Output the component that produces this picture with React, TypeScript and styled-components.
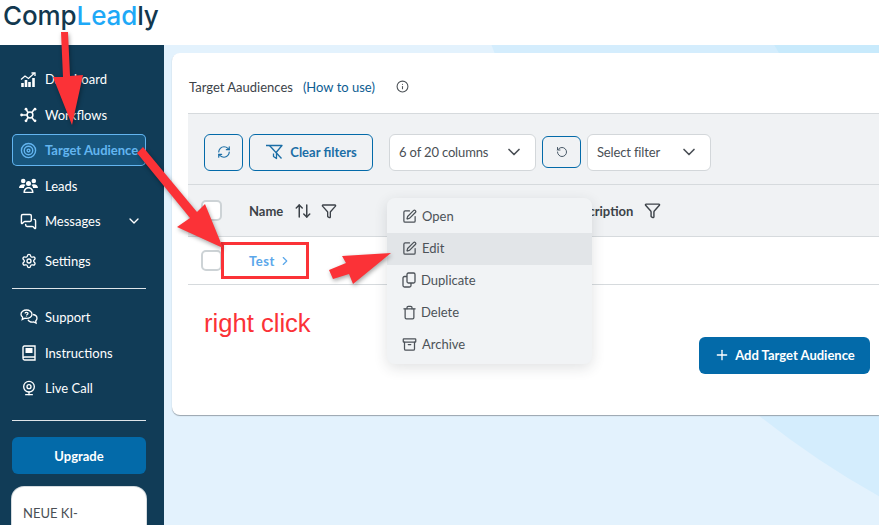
import styled, { createGlobalStyle } from 'styled-components';
import {
  Archive,
  ArrowUpDown,
  ChevronDown,
  ChevronRight,
  Funnel,
  Info,
  MessagesSquare,
  Plus,
  RefreshCw,
  RotateCcw,
  Settings,
  SquarePen,
  Target,
  Trash,
  Webcam,
} from 'lucide-react';

const GlobalStyle = createGlobalStyle`
  html, body { margin: 0; padding: 0; background: #fff; }
  * { box-sizing: border-box; }
  body { font-family: Lato, "Liberation Sans", sans-serif; }
`;

const DashboardIcon = () => (
  <svg width="17" height="15" viewBox="0 0 17 15" fill="none" stroke="currentColor" strokeWidth="1.3">
    <path d="M1 7.500 5 4l3.500 2.500L14.500 1" />
    <path d="M11.500 1H15v3" />
    <path d="M2.500 15v-4M6 15V8M9.500 15v-5M13.500 15V6" strokeWidth="2.600" />
  </svg>
);

const WorkflowIcon = () => (
  <svg width="18" height="16" viewBox="0 0 18 16" fill="none" stroke="currentColor" strokeWidth="1.500">
    <circle cx="10" cy="8" r="2.900" />
    <path d="M1 8h6M8 5.500 6.500 3M12 5.500 14 2.500M8 10.500 6.500 13M12 10.500l2 3" />
    <circle cx="1.600" cy="8" r="1.400" fill="currentColor" stroke="none" />
    <circle cx="6" cy="2.200" r="1.400" fill="currentColor" stroke="none" />
    <circle cx="15" cy="2.200" r="1.400" fill="currentColor" stroke="none" />
    <circle cx="6" cy="13.800" r="1.400" fill="currentColor" stroke="none" />
    <circle cx="15" cy="13.800" r="1.400" fill="currentColor" stroke="none" />
  </svg>
);

const LeadsIcon = () => (
  <svg width="19" height="15" viewBox="0 0 19 15" fill="currentColor">
    <circle cx="4.200" cy="3" r="2.300" />
    <circle cx="14.800" cy="3" r="2.300" />
    <circle cx="9.500" cy="5.500" r="2.500" />
    <path d="M0 10c0-2.500 1.700-3.800 4.200-3.800 1 0 1.800.2 2.400.6C5.600 7.600 5 8.700 5 10H0ZM19 10c0-2.500-1.700-3.800-4.200-3.800-1 0-1.800.2-2.400.6 1 .8 1.600 1.900 1.600 3.200h5Z" />
    <path d="M4.500 15c-.3-3.600 2-6 5-6s5.300 2.400 5 6h-10Zm1.500-1.200h7c-.3-2-1.500-3.400-3.500-3.400S6.300 11.800 6 13.800Z" fillRule="evenodd" />
  </svg>
);

const SupportIcon = () => (
  <svg width="18" height="16" viewBox="0 0 18 16" fill="none" stroke="currentColor" strokeWidth="1.300">
    <path d="M6.500 1C3.400 1 1 2.900 1 5.200c0 1.200.7 2.300 1.700 3L2.200 10.500l2.700-1.300c.5.1 1 .2 1.600.2 3 0 5.500-1.900 5.500-4.200S9.500 1 6.500 1Z" />
    <path d="M13 5.500c2.200.4 4 1.900 4 3.800 0 1-.5 1.900-1.300 2.600l.4 2.300-2.400-1.200c-2.400.4-4.800-.4-5.700-2.300" />
    <path d="M5 4.300c.3-1.300 3-1.300 3 .2 0 1-1.500 1-1.500 2M6.500 7.500v.5" />
  </svg>
);

const InstructionsIcon = () => (
  <svg width="14" height="16" viewBox="0 0 14 16" fill="none" stroke="currentColor" strokeWidth="1.400">
    <path d="M1 13V2.300C1 1.600 1.600 1 2.300 1H13v11H2.500C1.700 12 1 12.500 1 13.300 1 14.200 1.700 15 2.500 15H13v-3" />
    <rect x="3.500" y="3" width="7" height="5" fill="currentColor" stroke="none" />
  </svg>
);

const ClearFilterIcon = () => (
  <svg width="20" height="16" viewBox="0 0 20 16" fill="none" stroke="currentColor" strokeWidth="1.300" strokeLinejoin="round">
    <path d="M1 1.500h16L11.500 8v6.500l-3-2V9.500" />
    <path d="M4.500 1.500 16.500 14.500" />
  </svg>
);

const DuplicateIcon = () => (
  <svg width="15" height="16" viewBox="0 0 15 16" fill="none" stroke="currentColor" strokeWidth="1.300" strokeLinejoin="round">
    <path d="M5 2.500c0-.8.6-1.500 1.400-1.500h5.200c.8 0 1.400.7 1.400 1.500v7c0 .8-.6 1.500-1.400 1.500H6.400C5.600 11 5 10.300 5 9.500v-7Z" />
    <path d="M5 4.500H2.500C1.700 4.500 1 5.200 1 6v7.500c0 .8.700 1.500 1.500 1.500h5c.8 0 1.500-.7 1.500-1.500V11" />
  </svg>
);

const Page = styled.div`
  position: relative;
  width: 879px;
  height: 525px;
  overflow: hidden;
  display: flex;
  flex-direction: column;
  background: #fff;
`;

const Header = styled.header`
  height: 45px;
  flex: none;
  padding-left: 3px;
  background: #fff;
`;

const Logo = styled.div`
  font-family: Inter, sans-serif;
  font-size: 26px;
  line-height: 32px;
  font-weight: 500;
  letter-spacing: -0.1px;
  color: #12384f;
`;

const LogoAccent = styled.span`
  color: #1ea9f7;
`;

const Body = styled.div`
  flex: 1;
  display: flex;
  min-height: 0;
`;

const Sidebar = styled.aside`
  width: 164px;
  flex: none;
  padding: 18px 18px 0 12px;
  background: #113c57;
  display: flex;
  flex-direction: column;
  overflow: hidden;
`;

const NavGroup = styled.nav`
  display: flex;
  flex-direction: column;
  gap: 3.5px;
`;

const NavItem = styled.div<{ $active?: boolean; $spaced?: boolean }>`
  height: 32px;
  flex: none;
  display: flex;
  align-items: center;
  gap: 7px;
  padding-left: 7px;
  margin-top: ${(p) => (p.$spaced ? '4.5px' : '0')};
  border-radius: 5px;
  font-size: 13px;
  color: ${(p) => (p.$active ? '#63b5f0' : '#fff')};
  background: ${(p) => (p.$active ? '#17557c' : 'transparent')};
  box-shadow: ${(p) => (p.$active ? 'inset 0 0 0 1px #63b5f0' : 'none')};
  font-weight: ${(p) => (p.$active ? 700 : 400)};
`;

const NavIcon = styled.span`
  width: 19px;
  height: 18px;
  display: flex;
  align-items: center;
  justify-content: center;
  flex: none;
`;

const NavCaret = styled.span`
  margin-left: auto;
  margin-right: 4px;
  display: flex;
`;

const Divider = styled.hr<{ $before: number; $after: number }>`
  width: 100%;
  height: 1px;
  flex: none;
  margin: ${(p) => p.$before}px 0 ${(p) => p.$after}px;
  border: 0;
  background: #dfe5e9;
`;

const UpgradeButton = styled.div`
  height: 37px;
  flex: none;
  display: flex;
  align-items: center;
  justify-content: center;
  border-radius: 6px;
  background: #036aa9;
  color: #fff;
  font-size: 13px;
  font-weight: 700;
`;

const PromoCard = styled.div`
  margin-top: 13px;
  height: 120px;
  flex: none;
  padding: 18px 11px;
  border-radius: 12px;
  background: #fff;
  box-shadow: 0 0 0 1px #d5dbdf;
  color: #4a4f55;
  font-size: 13px;
  line-height: 17px;
`;

const Main = styled.main`
  position: relative;
  flex: 1;
  min-width: 0;
  padding: 8px 0 0 8px;
  background: #e3f2fd;
  overflow: hidden;
`;

const BackdropCircle = styled.div<{ $radius: number; $tone: string }>`
  position: absolute;
  left: ${(p) => 1131 - p.$radius}px;
  top: ${(p) => -298 - p.$radius}px;
  width: ${(p) => p.$radius * 2}px;
  height: ${(p) => p.$radius * 2}px;
  border-radius: 50%;
  background: ${(p) => p.$tone};
`;

const Card = styled.section`
  position: relative;
  height: 362px;
  border-radius: 8px 0 0 8px;
  background: #fff;
  box-shadow: 0 1px 1px #98a4ad;
  display: flex;
  flex-direction: column;
`;

const TitleRow = styled.div`
  height: 60px;
  flex: none;
  display: flex;
  align-items: center;
  padding: 7px 0 0 17px;
  font-size: 13px;
  color: #3d4349;
`;

const HowTo = styled.span`
  margin-left: 10px;
  color: #0d5d92;
`;

const InfoIcon = styled.span`
  margin-left: 21px;
  display: flex;
  color: #4d5358;
`;

const TableArea = styled.div`
  margin-left: 16px;
  display: flex;
  flex-direction: column;
`;

const Toolbar = styled.div`
  height: 72px;
  display: flex;
  align-items: center;
  padding: 6px 0 0 16px;
  background: #f0f2f4;
  border-top: 1px solid #d6dadd;
  border-bottom: 1px solid #d6dadd;
`;

const OutlineButton = styled.div<{ $width: number; $height?: number; $gapAfter?: number }>`
  width: ${(p) => p.$width}px;
  height: ${(p) => p.$height ?? 37}px;
  margin-right: ${(p) => p.$gapAfter ?? 6}px;
  flex: none;
  display: flex;
  align-items: center;
  justify-content: center;
  gap: 5px;
  border: 1px solid #036aa9;
  border-radius: 6px;
  color: #1b6ea6;
  font-size: 13px;
  font-weight: 700;
`;

const SelectBox = styled.div<{ $width: number; $gapAfter?: number }>`
  width: ${(p) => p.$width}px;
  height: 37px;
  margin-right: ${(p) => p.$gapAfter ?? 6}px;
  flex: none;
  display: flex;
  align-items: center;
  justify-content: space-between;
  padding: 0 11px 0 9px;
  border: 1px solid #d3d7da;
  border-radius: 6px;
  background: #fff;
  color: #4a4f55;
  font-size: 13px;
  letter-spacing: -0.15px;
`;

const HeaderRow = styled.div`
  height: 52px;
  display: flex;
  align-items: center;
  padding-left: 13px;
  background: #f0f2f4;
  border-bottom: 1px solid #d6dadd;
  color: #3c4248;
  font-size: 13px;
  font-weight: 700;
`;

const Checkbox = styled.span`
  width: 21px;
  height: 21px;
  flex: none;
  border: 2px solid #cdd3d6;
  border-radius: 5px;
  background: #fff;
`;

const NameColumn = styled.div`
  margin-left: 27px;
  width: 317px;
  display: flex;
  align-items: center;
`;

const ColumnIcons = styled.div`
  margin-left: 11px;
  display: flex;
  align-items: center;
  gap: 9px;
  color: #3c4248;
`;

const DescriptionColumn = styled.div`
  display: flex;
  align-items: center;
  gap: 11px;
  color: #3c4248;
`;

const DataRow = styled.div`
  height: 48px;
  display: flex;
  align-items: center;
  padding-left: 13px;
  background: #fff;
  border-bottom: 1px solid #d6dadd;
`;

const RowLink = styled.div`
  margin-left: 27px;
  display: flex;
  align-items: center;
  gap: 3px;
  color: #5ba7ea;
  font-size: 13px;
  font-weight: 700;
  letter-spacing: 0.5px;
`;

const CardFooter = styled.div`
  flex: 1;
  display: flex;
  justify-content: flex-end;
  align-items: flex-start;
  padding: 52px 9px 0 0;
`;

const AddButton = styled.div`
  width: 171px;
  height: 37px;
  padding-bottom: 2px;
  display: flex;
  align-items: center;
  justify-content: center;
  gap: 5px;
  border-radius: 6px;
  background: #036aa9;
  color: #fff;
  font-size: 13px;
  font-weight: 700;
`;

const ContextMenu = styled.div`
  position: absolute;
  left: 387px;
  top: 198px;
  width: 205px;
  height: 166px;
  padding-top: 3px;
  border-radius: 8px;
  background: #f1f3f5;
  box-shadow: 0 4px 14px rgba(40, 50, 60, 0.14);
  display: flex;
  flex-direction: column;
`;

const MenuItem = styled.div<{ $hover?: boolean; $gap: number }>`
  height: 32px;
  flex: none;
  display: flex;
  align-items: center;
  gap: ${(p) => p.$gap}px;
  padding: 0 0 2px 15px;
  background: ${(p) => (p.$hover ? '#e2e5e8' : 'transparent')};
  color: #4c5258;
  font-size: 13px;
`;

const Annotations = styled.svg`
  position: absolute;
  inset: 0;
  pointer-events: none;
  filter: drop-shadow(1.5px 2px 2px rgba(0, 0, 0, 0.35));
`;

const RedFrame = styled.div`
  position: absolute;
  left: 221px;
  top: 242px;
  width: 88px;
  height: 37px;
  border: 3px solid #fb3237;
`;

const RedNote = styled.div`
  position: absolute;
  left: 204px;
  top: 308px;
  font-family: "Liberation Sans", Arial, sans-serif;
  font-size: 25.6px;
  line-height: 30px;
  color: #fb3237;
`;

const App = () => (
  <Page>
    <GlobalStyle />
    <Header>
      <Logo>
        Comp<LogoAccent>Lead</LogoAccent>ly
      </Logo>
    </Header>
    <Body>
      <Sidebar>
        <NavGroup>
          <NavItem>
            <NavIcon><DashboardIcon /></NavIcon>Dashboard
          </NavItem>
          <NavItem>
            <NavIcon><WorkflowIcon /></NavIcon>Workflows
          </NavItem>
          <NavItem $active>
            <NavIcon><Target size={17} /></NavIcon>Target Audience
          </NavItem>
          <NavItem>
            <NavIcon><LeadsIcon /></NavIcon>Leads
          </NavItem>
          <NavItem>
            <NavIcon><MessagesSquare size={17} /></NavIcon>Messages
            <NavCaret><ChevronDown size={16} /></NavCaret>
          </NavItem>
          <NavItem $spaced>
            <NavIcon><Settings size={16} /></NavIcon>Settings
          </NavItem>
        </NavGroup>
        <Divider $before={11} $after={12} />
        <NavGroup>
          <NavItem>
            <NavIcon><SupportIcon /></NavIcon>Support
          </NavItem>
          <NavItem>
            <NavIcon><InstructionsIcon /></NavIcon>Instructions
          </NavItem>
          <NavItem>
            <NavIcon><Webcam size={16} /></NavIcon>Live Call
          </NavItem>
        </NavGroup>
        <Divider $before={16} $after={16} />
        <UpgradeButton>Upgrade</UpgradeButton>
        <PromoCard>
          NEUE KI-
          <br />
          EVOLUTION
        </PromoCard>
      </Sidebar>
      <Main>
        <BackdropCircle $radius={857} $tone="#d4edfd" />
        <BackdropCircle $radius={600} $tone="#c8eafc" />
        <Card>
          <TitleRow>
            Target Aaudiences
            <HowTo>(How to use)</HowTo>
            <InfoIcon><Info size={13} /></InfoIcon>
          </TitleRow>
          <TableArea>
            <Toolbar>
              <OutlineButton $width={39}><RefreshCw size={14} /></OutlineButton>
              <OutlineButton $width={124} $gapAfter={16}>
                <ClearFilterIcon />
                Clear filters
              </OutlineButton>
              <SelectBox $width={147}>
                6 of 20 columns
                <ChevronDown size={20} />
              </SelectBox>
              <OutlineButton $width={39} $height={32}><RotateCcw size={12} color="#4a5a68" /></OutlineButton>
              <SelectBox $width={124}>
                Select filter
                <ChevronDown size={20} />
              </SelectBox>
            </Toolbar>
            <HeaderRow>
              <Checkbox />
              <NameColumn>
                Name
                <ColumnIcons>
                  <ArrowUpDown size={18} />
                  <Funnel size={16} />
                </ColumnIcons>
              </NameColumn>
              <DescriptionColumn>
                Description
                <Funnel size={17} />
              </DescriptionColumn>
            </HeaderRow>
            <DataRow>
              <Checkbox />
              <RowLink>
                Test
                <ChevronRight size={14} />
              </RowLink>
            </DataRow>
          </TableArea>
          <CardFooter>
            <AddButton>
              <Plus size={16} />
              Add Target Audience
            </AddButton>
          </CardFooter>
        </Card>
      </Main>
    </Body>
    <ContextMenu>
      <MenuItem $gap={5}><SquarePen size={15} />Open</MenuItem>
      <MenuItem $gap={5} $hover><SquarePen size={15} />Edit</MenuItem>
      <MenuItem $gap={4}><DuplicateIcon />Duplicate</MenuItem>
      <MenuItem $gap={4}><Trash size={15} />Delete</MenuItem>
      <MenuItem $gap={5}><Archive size={15} />Archive</MenuItem>
    </ContextMenu>
    <RedFrame />
    <RedNote>right click</RedNote>
    <Annotations width="879" height="525" viewBox="0 0 879 525">
      <polygon fill="#fb3237" points="61,32 68,32 70,76 83,75 72,125 53,77 63,77" />
      <polygon fill="#fb3237" points="137,153 143,147 197,212 205,204 223,248 177,227 190,218" />
      <polygon fill="#fb3237" points="329,270 346,263 342,256 391,253 353,284 349,274 333,279" />
    </Annotations>
  </Page>
);

export default App;
